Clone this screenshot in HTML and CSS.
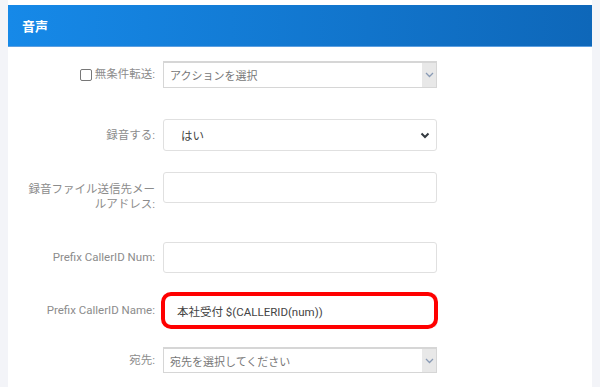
FILE: index.html
```html
<!DOCTYPE html>
<html lang="ja">
<head>
    <meta charset="utf-8">
    <title>音声</title>
    <link rel="stylesheet" href="styles.css">
</head>
<body>
<div class="panel">
    <div class="panel-head"><h2>音声</h2></div>

    <div class="form">
        <div class="row r1">
            <label class="lbl"><span class="chk"></span>無条件転送:</label>
            <div class="pick">
                <span class="pick-text">アクションを選択</span>
                <span class="pick-arrow">
                    <svg width="9" height="6" viewBox="0 0 9 6"><path d="M1 1l3.5 3.5L8 1" fill="none" stroke="#8a9bb5" stroke-width="1.3"/></svg>
                </span>
            </div>
        </div>

        <div class="row r2">
            <label class="lbl">録音する:</label>
            <div class="field sel">
                <span>はい</span>
                <svg width="10" height="7" viewBox="0 0 10 7"><path d="M1.5 1.5l3.5 3.5 3.5-3.5" fill="none" stroke="#343a40" stroke-width="2"/></svg>
            </div>
        </div>

        <div class="row r3">
            <label class="lbl">録音ファイル送信先メールアドレス:</label>
            <div class="field"></div>
        </div>

        <div class="row r4">
            <label class="lbl">Prefix CallerID Num:</label>
            <div class="field"></div>
        </div>

        <div class="row r5">
            <label class="lbl">Prefix CallerID Name:</label>
            <div class="field mark">本社受付 $(CALLERID(num))</div>
        </div>

        <div class="row r6">
            <label class="lbl">宛先:</label>
            <div class="pick">
                <span class="pick-text">宛先を選択してください</span>
                <span class="pick-arrow">
                    <svg width="9" height="6" viewBox="0 0 9 6"><path d="M1 1l3.5 3.5L8 1" fill="none" stroke="#8a9bb5" stroke-width="1.3"/></svg>
                </span>
            </div>
        </div>
    </div>
</div>
</body>
</html>
```

FILE: styles.css
```css
body {
    margin: 0;
    background: #f3f4f8;
    font-family: Roboto, "Noto Sans CJK JP", sans-serif;
    padding: 0 8px;
    height: 387px;
    overflow: hidden;
}
.panel {
    background: #fff;
    height: 100%;
    padding-top: 5px;
    box-sizing: border-box;
}
.panel-head {
    height: 42px;
    background: linear-gradient(90deg, #1689e8, #0e67b9);
    border-bottom: 1px solid #5d9fe0;
    box-sizing: border-box;
    padding-left: 14px;
    display: flex;
    align-items: center;
}
.panel-head h2 {
    margin: 0;
    color: #fff;
    font-size: 13px;
    font-weight: bold;
}

.form {
    padding-left: 20px;
}
.row {
    display: flex;
    align-items: center;
}
.lbl {
    width: 127px;
    padding-right: 8px;
    text-align: right;
    color: #8c8c8c;
    font-size: 11.5px;
    line-height: 15px;
    display: flex;
    justify-content: flex-end;
    align-items: center;
}
.r3 {
    align-items: flex-start;
}
.r3 .lbl {
    display: block;
    padding-top: 10px;
}
.chk {
    width: 10px;
    height: 10px;
    border: 1px solid #777;
    border-radius: 2px;
    margin-right: 3px;
}

.r1 { margin-top: 14px; }
.r2 { margin-top: 31px; }
.r3 { margin-top: 21px; }
.r4 { margin-top: 30px; }
.r5 { margin-top: 21px; }
.r6 { margin-top: 20px; }

.pick {
    width: 274px;
    height: 27px;
    border: 1px solid #d6d6d6;
    border-top-width: 2px;
    box-sizing: border-box;
    display: flex;
    align-items: center;
}
.r6 .pick { height: 26px; }
.pick-text {
    flex: 1;
    padding-left: 6px;
    font-size: 11px;
    color: #777;
}
.pick-arrow {
    width: 14px;
    height: 100%;
    background: #e8e8e8;
    display: flex;
    align-items: center;
    justify-content: center;
}

.field {
    width: 274px;
    height: 32px;
    border: 1px solid #e0e0e0;
    border-radius: 3px;
    box-sizing: border-box;
    font-size: 11.5px;
    color: #444;
    display: flex;
    align-items: center;
}
.r3 .field, .r4 .field { height: 31px; }
.sel {
    justify-content: space-between;
    padding: 0 6px 0 17px;
}
.mark {
    height: 33px;
    padding-left: 13px;
    position: relative;
}
.mark::after {
    content: "";
    position: absolute;
    top: -3px;
    bottom: -3px;
    left: -3px;
    right: -2px;
    border: 4px solid #f00;
    border-radius: 10px;
}
```
